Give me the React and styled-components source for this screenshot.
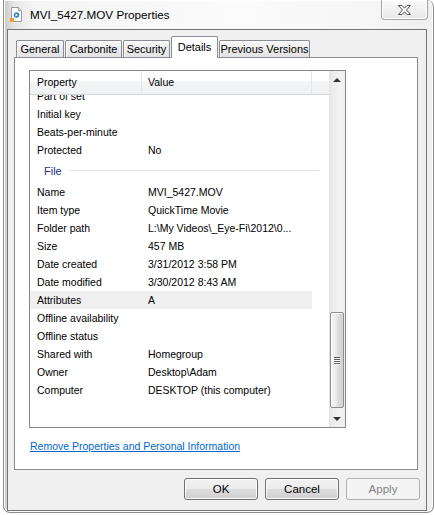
import React from "react";
import styled, { createGlobalStyle } from "styled-components";

const GlobalStyle = createGlobalStyle`
  html, body {
    margin: 0;
    padding: 0;
    background: #ffffff;
  }
  body {
    font-family: "Liberation Sans", Arial, sans-serif;
    font-size: 10.5px;
    color: #000000;
  }
  * { box-sizing: border-box; }
`

const Screen = styled.div`
  width: 434px;
  height: 515px;
  display: flex;
  padding: 0 0 2px 3px;
  background: #ffffff;
`
const Window = styled.div`
  flex: 1;
  display: flex;
  flex-direction: column;
  border: 1px solid #8c8c8c;
  border-top: none;
  border-radius: 0 7px 7px 7px;
  box-shadow: inset 0 0 0 1px #fdfdfd;
  background: linear-gradient(to right, #c9c9c9 0px, #e6e6e6 10px, #f5f5f5 30px, #fbfbfb 55%, #f6f6f6 85%, #efefef 100%);
`
const TitleBar = styled.div`
  height: 29px;
  display: flex;
  align-items: center;
  padding-left: 6px;
`
const TitleText = styled.span`
  margin-left: 7px;
  font-size: 11.7px;
  color: #000000;
  flex: 1;
  padding-bottom: 1px;
`
const CloseButton = styled.div`
  align-self: flex-start;
  width: 47px;
  height: 20px;
  margin-right: 5px;
  display: flex;
  align-items: center;
  justify-content: center;
  border: 1px solid #a4a4a4;
  border-top: none;
  border-radius: 0 0 4px 4px;
  background: linear-gradient(#fafafa, #f1f1f1 50%, #e8e8e8);
  box-shadow: inset 0 0 0 1px #ffffff;
`
const Body = styled.div`
  flex: 1;
  margin: 0 6px 1px 3px;
  border: 1px solid #747474;
  background: #f0f0f0;
  display: flex;
  flex-direction: column;
`
const TabStrip = styled.div`
  margin-top: 6px;
  height: 21px;
  padding-left: 8px;
  display: flex;
  align-items: flex-end;
  gap: 1px;
  position: relative;
  z-index: 1;
`
const Tab = styled.div`
  width: ${p => p.$w}px;
  height: ${p => (p.$active ? 22 : 17)}px;
  margin-bottom: ${p => (p.$active ? -1 : 0)}px;
  display: flex;
  align-items: center;
  justify-content: center;
  border: 1px solid #898c95;
  border-bottom: none;
  border-radius: 2px 2px 0 0;
  background: ${p => (p.$active ? '#ffffff' : 'linear-gradient(#f7f7f7, #ececec 50%, #e2e2e2)')};
  box-shadow: ${p => (p.$active ? 'none' : 'inset 1px 1px 0 #fcfcfc')};
  padding-bottom: ${p => (p.$active ? 2 : 0)}px;
  font-size: 11px;
`
const Panel = styled.div`
  flex: 1;
  margin: 0 8px 0 6px;
  border: 1px solid #898c95;
  background: #ffffff;
  padding: 12px 14px 0 14px;
  display: flex;
  flex-direction: column;
`
const ListView = styled.div`
  width: 317px;
  height: 358px;
  border: 1px solid #828790;
  display: flex;
`
const ListMain = styled.div`
  flex: 1;
  display: flex;
  flex-direction: column;
  overflow: hidden;
`
const Header = styled.div`
  height: 24px;
  display: flex;
  border-bottom: 1px solid #d5d5d5;
  background: linear-gradient(#ffffff 0%, #ffffff 45%, #f3f4f6 46%, #f1f2f4 100%);
`
const HeaderCell = styled.div`
  width: ${p => p.$w}px;
  padding-left: ${p => p.$pad}px;
  display: flex;
  align-items: center;
  border-right: 1px solid #e3e5e8;
  padding-bottom: 1px;
`
const HeaderFill = styled.div`
  flex: 1;
`
const Rows = styled.div`
  flex: 1;
  overflow: hidden;
`
const RowsInner = styled.div`
  margin-top: -8px;
`
const Row = styled.div`
  width: 282px;
  height: 18px;
  display: flex;
  align-items: center;
  background: ${p => (p.$hl ? '#f0f0f0' : 'transparent')};
  white-space: nowrap;
`
const PropCell = styled.div`
  width: 112px;
  padding-left: 7px;
`
const ValueCell = styled.div`
  width: 170px;
  padding-left: 6px;
  overflow: hidden;
`
const GroupRow = styled.div`
  width: 289px;
  height: 24px;
  padding-left: 14px;
  padding-bottom: 1px;
  display: flex;
  align-items: center;
  color: #1e3287;
  font-size: 11px;
`
const GroupLine = styled.div`
  flex: 1;
  height: 1px;
  margin-left: 7px;
  background: #e2e5ea;
`
const ScrollBar = styled.div`
  width: 16px;
  display: flex;
  flex-direction: column;
  background: linear-gradient(to right, #e4e4e4, #ededed 25%, #f2f2f2 70%, #efefef);
`
const ArrowBox = styled.div`
  height: 17px;
  display: flex;
  align-items: center;
  justify-content: center;
`
const Arrow = styled.div`
  width: 0;
  height: 0;
  border-left: 4px solid transparent;
  border-right: 4px solid transparent;
  ${p => (p.$up ? 'border-bottom: 4px solid #333;' : 'border-top: 4px solid #333;')}
`
const Track = styled.div`
  flex: 1;
  display: flex;
  flex-direction: column;
`
const Thumb = styled.div`
  margin: ${p => p.$top}px 1px 0 1px;
  height: ${p => p.$h}px;
  border: 1px solid #8f8f8f;
  border-radius: 2px;
  background: linear-gradient(to right, #f4f4f4, #ececec 40%, #dcdcdc 60%, #d2d2d2);
  box-shadow: inset 1px 1px 0 #ffffff;
  display: flex;
  align-items: center;
  justify-content: center;
`
const Grip = styled.div`
  width: 6px;
  display: flex;
  flex-direction: column;
  gap: 1px;
`
const GripLine = styled.div`
  height: 1px;
  background: #5e5e5e;
  box-shadow: 0 1px 0 #ffffff;
`
const Link = styled.a`
  margin-top: 11px;
  padding-left: 1px;
  line-height: 14px;
  color: #0066cc;
  text-decoration: underline;
  cursor: pointer;
`
const ButtonRow = styled.div`
  display: flex;
  justify-content: flex-end;
  gap: 7px;
  padding: 8px 6px 10px 0;
`
const Button = styled.div`
  width: 74px;
  height: 22px;
  display: flex;
  align-items: center;
  justify-content: center;
  border: 1px solid ${p => (p.$disabled ? '#adb2b5' : '#707070')};
  border-radius: 3px;
  color: ${p => (p.$disabled ? '#838383' : '#000000')};
  background: ${p => (p.$disabled ? '#f4f4f4' : 'linear-gradient(#f2f2f2, #ebebeb 50%, #dddddd 51%, #cfcfcf)')};
  box-shadow: inset 0 0 0 1px ${p => (p.$disabled ? '#f4f4f4' : '#fcfcfc')};
  font-size: 11.5px;
  padding-bottom: 1px;
`

const tabs = [
  { label: 'General', w: 48 },
  { label: 'Carbonite', w: 57 },
  { label: 'Security', w: 47 },
  { label: 'Details', w: 47, active: true },
  { label: 'Previous Versions', w: 91 },
]

const rows = [
  ['Part of set', ''],
  ['Initial key', ''],
  ['Beats-per-minute', ''],
  ['Protected', 'No'],
  { group: 'File' },
  ['Name', 'MVI_5427.MOV'],
  ['Item type', 'QuickTime Movie'],
  ['Folder path', 'L:\\My Videos\\_Eye-Fi\\2012\\0...'],
  ['Size', '457 MB'],
  ['Date created', '3/31/2012 3:58 PM'],
  ['Date modified', '3/30/2012 8:43 AM'],
  ['Attributes', 'A', true],
  ['Offline availability', ''],
  ['Offline status', ''],
  ['Shared with', 'Homegroup'],
  ['Owner', 'Desktop\\Adam'],
  ['Computer', 'DESKTOP (this computer)'],
]

function FileIcon() {
  return (
    <svg width="13" height="15" viewBox="0 0 13 15">
      <path d="M1.5 0.5 H8.5 L11.5 3.5 V14.5 H1.5 Z" fill="#ffffff" stroke="#9a9a9a" />
      <path d="M8.5 0.5 V3.5 H11.5" fill="#e8e8e8" stroke="#9a9a9a" />
      <circle cx="6.5" cy="8" r="2.8" fill="#3b7fd0" />
      <path d="M5.5 6.6 L8 8 L5.5 9.4 Z" fill="#ffffff" />
      <rect x="0" y="11" width="4" height="4" fill="#f0a030" />
    </svg>
  )
}

function CloseGlyph() {
  return (
    <svg width="15" height="12" viewBox="0 0 15 12">
      <polygon
        points="1.5,1.5 5,1.5 7.5,4.2 10,1.5 13.5,1.5 9.5,6 13.5,10.5 10,10.5 7.5,7.8 5,10.5 1.5,10.5 5.5,6"
        fill="#ffffff"
        stroke="#555555"
        strokeWidth="1"
        strokeLinejoin="round"
      />
    </svg>
  )
}

function App() {
  const createTabs = tabs.map((el, idx) => (
    <Tab key={idx} $w={el.w} $active={el.active}>{el.label}</Tab>
  ))

  const createRows = rows.map((el, idx) => {
    if (el.group) {
      return (
        <GroupRow key={idx}>{el.group}<GroupLine /></GroupRow>
      )
    }
    return (
      <Row key={idx} $hl={el[2]}>
        <PropCell>{el[0]}</PropCell>
        <ValueCell>{el[1]}</ValueCell>
      </Row>
    )
  })

  return (
    <>
      <GlobalStyle />
      <Screen>
        <Window>
          <TitleBar>
            <FileIcon />
            <TitleText>MVI_5427.MOV Properties</TitleText>
            <CloseButton><CloseGlyph /></CloseButton>
          </TitleBar>
          <Body>
            <TabStrip>{createTabs}</TabStrip>
            <Panel>
              <ListView>
                <ListMain>
                  <Header>
                    <HeaderCell $w={112} $pad={7}>Property</HeaderCell>
                    <HeaderCell $w={170} $pad={6}>Value</HeaderCell>
                    <HeaderFill />
                  </Header>
                  <Rows>
                    <RowsInner>{createRows}</RowsInner>
                  </Rows>
                </ListMain>
                <ScrollBar>
                  <ArrowBox><Arrow $up /></ArrowBox>
                  <Track>
                    <Thumb $top={224} $h={96}>
                      <Grip>
                        <GripLine /><GripLine /><GripLine /><GripLine />
                      </Grip>
                    </Thumb>
                  </Track>
                  <ArrowBox><Arrow /></ArrowBox>
                </ScrollBar>
              </ListView>
              <Link>Remove Properties and Personal Information</Link>
            </Panel>
            <ButtonRow>
              <Button>OK</Button>
              <Button>Cancel</Button>
              <Button $disabled>Apply</Button>
            </ButtonRow>
          </Body>
        </Window>
      </Screen>
    </>
  )
}

export default App;
